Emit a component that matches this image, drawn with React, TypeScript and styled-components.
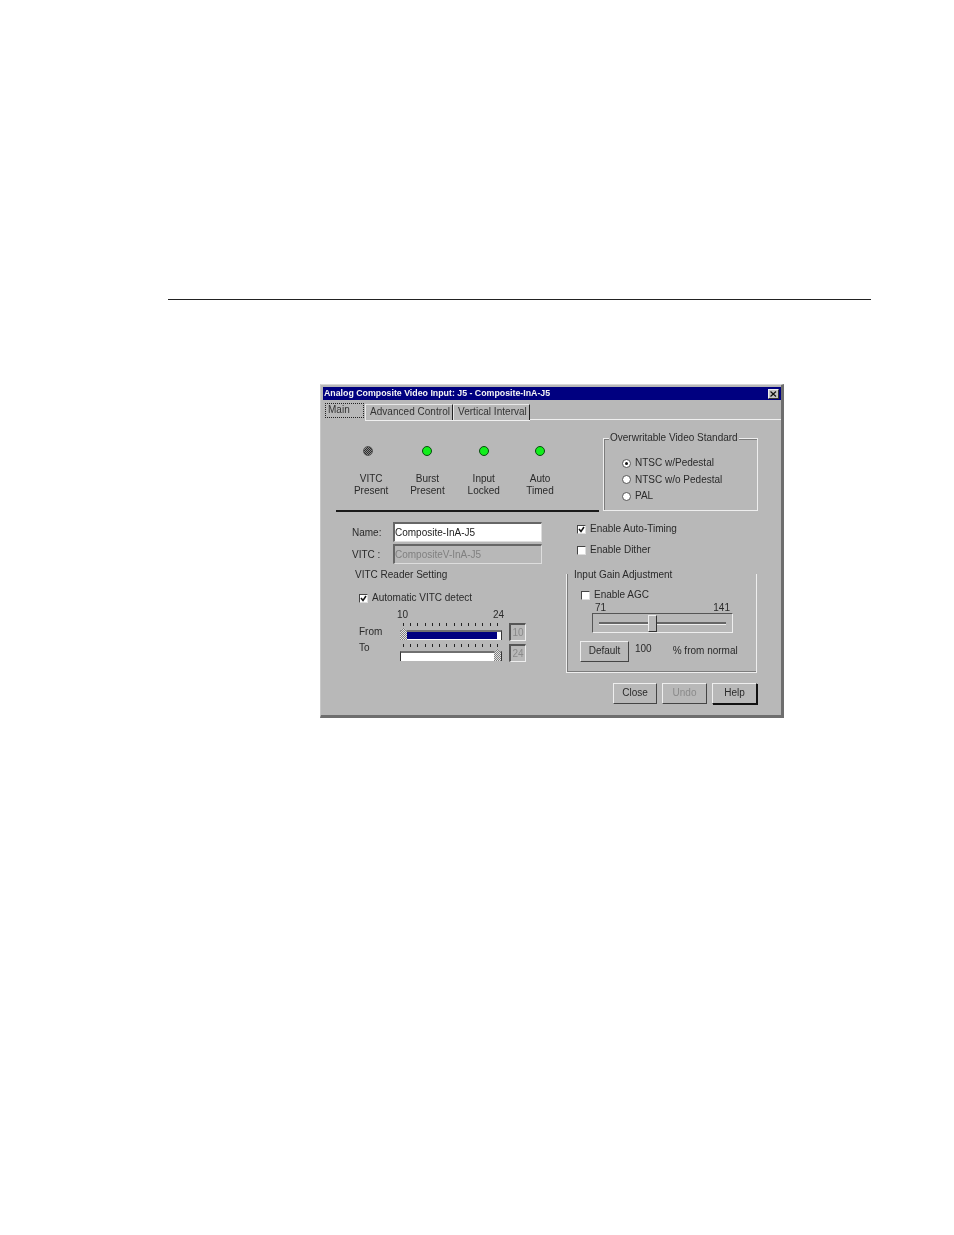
import React from 'react';
import styled, { createGlobalStyle } from 'styled-components';

const GlobalStyle = createGlobalStyle`
  html, body {
    margin: 0;
    padding: 0;
    background: #fff;
  }
  body {
    font-family: "Liberation Sans", Arial, sans-serif;
    font-size: 10px;
    color: #2a2a2a;
  }
`;

const Page = styled.div`
  width: 954px;
  height: 1235px;
  padding: 299px 0 0 168px;
  box-sizing: border-box;
`;

const Rule = styled.div`
  width: 703px;
  height: 1px;
  background: #222;
`;

const Dialog = styled.div`
  width: 464px;
  height: 334px;
  margin: 84px 0 0 152px;
  box-sizing: border-box;
  background: #b8b8b8;
  border: 1px solid #8a8a8a;
  border-top-color: #d8d8d8;
  border-left-color: #c8c8c8;
  border-right: 3px solid #6e6e6e;
  border-bottom: 3px solid #6e6e6e;
  padding: 2px 0 0 2px;
  display: flex;
  flex-direction: column;
  filter: blur(0.3px);
`;

const TitleBar = styled.div`
  height: 13px;
  background: #000080;
  color: #f4f4f4;
  font-size: 8.8px;
  font-weight: bold;
  line-height: 13px;
  padding: 0 2px 0 1px;
  display: flex;
  justify-content: space-between;
  align-items: center;
`;

const CloseBox = styled.div`
  width: 11px;
  height: 10px;
  background: #c4c4c4;
  border: 1px solid #333;
  border-top-color: #eee;
  border-left-color: #eee;
  box-sizing: border-box;
  display: flex;
  align-items: center;
  justify-content: center;
`;

const TabStrip = styled.div`
  display: flex;
  height: 18px;
  margin-top: 2px;
  padding-left: 2px;
  box-sizing: border-box;
`;

const Tab = styled.div<{ $w: number; $active?: boolean }>`
  width: ${p => p.$w}px;
  flex: none;
  box-sizing: border-box;
  height: 16px;
  padding-left: 4px;
  line-height: 14px;
  white-space: nowrap;
  letter-spacing: 0.03px;
  color: #333;
  border-top: 1px solid #e8e8e8;
  border-left: 1px solid #e8e8e8;
  border-right: 1px solid #222;
  margin-top: 2px;
  box-shadow: 0 1px 0 #f0f0f0;
  ${p => p.$active && `
    height: 15px;
    margin-top: 1px;
    margin-right: 1px;
    padding-left: 2px;
    line-height: 11px;
    border: 1px dotted #222;
    box-shadow: none;
  `}
`;

const TabFiller = styled.div`
  flex: 1;
  height: 18px;
  box-sizing: border-box;
  border-bottom: 1px solid #f0f0f0;
`;

const PanelBody = styled.div`
  flex: 1;
  display: grid;
  grid-template-columns: 276px 1fr;
  grid-template-rows: 92px 1fr;
`;

const LedColumn = styled.div`
  margin-left: 13px;
  border-bottom: 2px solid #1a1a1a;
  padding: 24px 0 0 7px;
  display: flex;
  align-items: flex-start;
`;

const Led = styled.div`
  width: 56.3px;
  text-align: center;
  line-height: 12px;
`;

const Lamp = styled.div<{ $on?: boolean }>`
  width: 10px;
  height: 10px;
  border-radius: 50%;
  margin: 2px auto 17px;
  box-sizing: border-box;
  background: ${p => (p.$on ? '#12ee1c' : 'repeating-conic-gradient(#2c2c2c 0 25%, #8a8a8a 0 50%) 0 0 / 2px 2px')};
  border: 1px solid ${p => (p.$on ? '#0a4a10' : '#555')};
  position: relative;
  left: ${p => (p.$on ? 0 : -3)}px;
`;

const GroupBox = styled.fieldset`
  margin: 12px 0 0 4px;
  padding: 0;
  width: 155px;
  height: 79px;
  box-sizing: border-box;
  border: 1px solid #eee;
  box-shadow: inset 1px 1px 0 #7c7c7c;
  font: inherit;
`;

const GroupLegend = styled.legend`
  margin-left: 5px;
  padding: 0 1px;
  line-height: 12px;
  background: #b8b8b8;
  position: relative;
`;

const RadioStack = styled.div`
  padding: 13px 0 0 18px;
  display: flex;
  flex-direction: column;
  gap: 4.5px;
`;

const OptionRow = styled.div`
  display: flex;
  align-items: center;
  gap: 4px;
  height: 12px;
  line-height: 12px;
`;

const Radio = styled.span<{ $on?: boolean }>`
  width: 9px;
  height: 9px;
  border-radius: 50%;
  background: #fff;
  border: 1px solid #555;
  box-sizing: border-box;
  display: flex;
  align-items: center;
  justify-content: center;
  &::after {
    content: '';
    width: 3px;
    height: 3px;
    border-radius: 50%;
    background: ${p => (p.$on ? '#111' : 'transparent')};
  }
`;

const Check = styled.span`
  width: 9px;
  height: 9px;
  background: #fff;
  border: 1px solid #444;
  border-right-color: #ddd;
  border-bottom-color: #ddd;
  box-sizing: border-box;
  display: flex;
`;

const LeftLower = styled.div`
  padding: 10px 0 0 29px;
`;

const FieldRow = styled.div`
  display: flex;
  align-items: center;
  height: 20px;
  margin-bottom: 2px;
`;

const FieldLabel = styled.span`
  width: 41px;
`;

const Field = styled.div<{ $off?: boolean }>`
  width: 149px;
  height: 20px;
  box-sizing: border-box;
  line-height: 17px;
  background: ${p => (p.$off ? '#b8b8b8' : '#fff')};
  color: ${p => (p.$off ? '#808080' : '#222')};
  border: 1px solid #ddd;
  border-top: 2px solid #666;
  border-left: 2px solid #666;
`;

const SectionLabel = styled.div`
  margin: 5px 0 0 3px;
  line-height: 12px;
`;

const AutoDetect = styled(OptionRow)`
  margin: 11px 0 0 7px;
`;

const SliderGrid = styled.div`
  display: grid;
  grid-template-columns: 41px 109px 18px;
  row-gap: 3px;
  margin: 5px 0 0 7px;
`;

const RangeNumbers = styled.div`
  grid-column: 2;
  grid-row: 1;
  display: flex;
  justify-content: space-between;
  width: 107px;
  margin-left: -3px;
  line-height: 11px;
`;

const RowLabel = styled.span<{ $top: number; $row: number }>`
  grid-column: 1;
  grid-row: ${p => p.$row};
  margin-top: ${p => p.$top}px;
  line-height: 12px;
`;

const Slider = styled.div<{ $row: number }>`
  grid-column: 2;
  grid-row: ${p => p.$row};
  width: 102px;
  height: 18px;
  position: relative;
`;

const Ticks = styled.div`
  display: flex;
  justify-content: space-between;
  padding: 0 4px 0 3px;
  height: 4px;
  span {
    width: 1px;
    height: 3px;
    background: #222;
  }
`;

const Track = styled.div`
  position: absolute;
  left: 0;
  right: 0;
  bottom: 1px;
  height: 10px;
  background: #fff;
  border-top: 2px solid #707070;
  border-left: 1px solid #333;
  border-right: 1px solid #333;
  box-sizing: border-box;
`;

const Fill = styled.div`
  position: absolute;
  left: 6px;
  right: 4px;
  top: 0;
  bottom: 1px;
  background: #000080;
`;

const Thumb = styled.div<{ $right?: boolean }>`
  position: absolute;
  bottom: 1px;
  ${p => (p.$right ? 'right: 1px;' : 'left: 0;')}
  width: 7px;
  height: 12px;
  background: repeating-conic-gradient(#808080 0 25%, #e4e4e4 0 50%) 0 0 / 2px 2px;
  clip-path: polygon(0 25%, 50% 0, 100% 25%, 100% 100%, 0 100%);
`;

const ValueBox = styled.div<{ $row: number }>`
  grid-column: 3;
  grid-row: ${p => p.$row};
  width: 17px;
  height: 18px;
  box-sizing: border-box;
  border: 1px solid #eee;
  border-top: 2px solid #555;
  border-left: 2px solid #555;
  color: #8a8a8a;
  line-height: 15px;
  text-align: center;
`;

const RightLower = styled.div`
  padding-top: 11px;
  margin-left: -22px;
`;

const CheckStack = styled.div`
  display: flex;
  flex-direction: column;
  gap: 9px;
`;

const GainBox = styled.div`
  display: flow-root;
  margin: 18px 0 0 -11px;
  width: 191px;
  height: 99px;
  box-sizing: border-box;
  border: 1px solid #eee;
  border-top: none;
  box-shadow: inset 1px 0 0 #7c7c7c, inset 0 -1px 0 #7c7c7c;
  padding: 0 0 0 7px;
`;

const GainTitle = styled.div`
  line-height: 12px;
  margin-top: -5px;
`;

const AgcRow = styled(OptionRow)`
  margin: 8px 0 0 7px;
`;

const GainNumbers = styled.div`
  display: flex;
  justify-content: space-between;
  width: 135px;
  margin: 2px 0 0 21px;
  line-height: 10px;
`;

const GainSlider = styled.div`
  width: 141px;
  height: 20px;
  margin-left: 18px;
  box-sizing: border-box;
  border: 1px solid #eee;
  border-top: 1px solid #555;
  border-left: 1px solid #555;
  position: relative;
  display: flex;
  align-items: center;
  padding: 0 6px;
`;

const Groove = styled.div`
  flex: 1;
  height: 2px;
  background: #666;
  border-bottom: 1px solid #eee;
`;

const GainThumb = styled.div`
  position: absolute;
  left: 55px;
  top: 1px;
  width: 9px;
  height: 17px;
  box-sizing: border-box;
  background: #b8b8b8;
  border: 1px solid #333;
  border-top-color: #eee;
  border-left-color: #eee;
`;

const GainFooter = styled.div`
  display: flex;
  align-items: flex-start;
  margin: 8px 0 0 6px;
`;

const Button = styled.div<{ $w: number; $off?: boolean; $primary?: boolean }>`
  width: ${p => p.$w}px;
  height: 21px;
  box-sizing: border-box;
  text-align: center;
  line-height: 18px;
  background: #b8b8b8;
  color: ${p => (p.$off ? '#8a8a8a' : '#2a2a2a')};
  border: 1px solid ${p => (p.$primary ? '#111' : '#444')};
  border-top-color: #eee;
  border-left-color: #eee;
  box-shadow: ${p => (p.$primary ? '1px 1px 0 #111' : 'none')};
`;

const Plain = styled.span<{ $left: number; $top: number }>`
  margin: ${p => p.$top}px 0 0 ${p => p.$left}px;
  line-height: 12px;
`;

const ButtonRow = styled.div`
  display: flex;
  gap: 5px;
  margin: 10px 0 0 36px;
`;

const App: React.FC = () => {
  const ticks = Array.from({ length: 14 }, (_, i) => <span key={i} />);

  const tick = (
    <svg width="7" height="7" viewBox="0 0 7 7">
      <path d="M1 3L3 5.5L6 1" fill="none" stroke="#111" strokeWidth="1.5" />
    </svg>
  );

  return (
    <>
      <GlobalStyle />
      <Page>
        <Rule />
        <Dialog>
          <TitleBar>
            <span>Analog Composite Video Input: J5 - Composite-InA-J5</span>
            <CloseBox>
              <svg width="7" height="6" viewBox="0 0 7 6">
                <path d="M0.5 0.5L6 5.5M6 0.5L0.5 5.5" stroke="#111" strokeWidth="1.2" />
              </svg>
            </CloseBox>
          </TitleBar>
          <TabStrip>
            <Tab $w={39} $active>Main</Tab>
            <Tab $w={88}>Advanced Control</Tab>
            <Tab $w={77}>Vertical Interval</Tab>
            <TabFiller />
          </TabStrip>
          <PanelBody>
            <LedColumn>
              <Led><Lamp />VITC<br />Present</Led>
              <Led><Lamp $on />Burst<br />Present</Led>
              <Led><Lamp $on />Input<br />Locked</Led>
              <Led><Lamp $on />Auto<br />Timed</Led>
            </LedColumn>
            <GroupBox>
              <GroupLegend>Overwritable Video Standard</GroupLegend>
              <RadioStack>
                <OptionRow><Radio $on />NTSC w/Pedestal</OptionRow>
                <OptionRow><Radio />NTSC w/o Pedestal</OptionRow>
                <OptionRow><Radio />PAL</OptionRow>
              </RadioStack>
            </GroupBox>
            <LeftLower>
              <FieldRow>
                <FieldLabel>Name:</FieldLabel>
                <Field>Composite-InA-J5</Field>
              </FieldRow>
              <FieldRow>
                <FieldLabel>VITC :</FieldLabel>
                <Field $off>CompositeV-InA-J5</Field>
              </FieldRow>
              <SectionLabel>VITC Reader Setting</SectionLabel>
              <AutoDetect>
                <Check>{tick}</Check>
                Automatic VITC detect
              </AutoDetect>
              <SliderGrid>
                <RangeNumbers><span>10</span><span>24</span></RangeNumbers>
                <RowLabel $row={2} $top={3}>From</RowLabel>
                <Slider $row={2}>
                  <Ticks>{ticks}</Ticks>
                  <Track><Fill /></Track>
                  <Thumb />
                </Slider>
                <ValueBox $row={2}>10</ValueBox>
                <RowLabel $row={3} $top={-2}>To</RowLabel>
                <Slider $row={3}>
                  <Ticks>{ticks}</Ticks>
                  <Track />
                  <Thumb $right />
                </Slider>
                <ValueBox $row={3}>24</ValueBox>
              </SliderGrid>
            </LeftLower>
            <RightLower>
              <CheckStack>
                <OptionRow>
                  <Check>{tick}</Check>
                  Enable Auto-Timing
                </OptionRow>
                <OptionRow><Check />Enable Dither</OptionRow>
              </CheckStack>
              <GainBox>
                <GainTitle>Input Gain Adjustment</GainTitle>
                <AgcRow><Check />Enable AGC</AgcRow>
                <GainNumbers><span>71</span><span>141</span></GainNumbers>
                <GainSlider>
                  <Groove />
                  <GainThumb />
                </GainSlider>
                <GainFooter>
                  <Button $w={49}>Default</Button>
                  <Plain $left={6} $top={2}>100</Plain>
                  <Plain $left={21} $top={4}>% from normal</Plain>
                </GainFooter>
              </GainBox>
              <ButtonRow>
                <Button $w={44}>Close</Button>
                <Button $w={45} $off>Undo</Button>
                <Button $w={45} $primary>Help</Button>
              </ButtonRow>
            </RightLower>
          </PanelBody>
        </Dialog>
      </Page>
    </>
  );
};

export default App;
